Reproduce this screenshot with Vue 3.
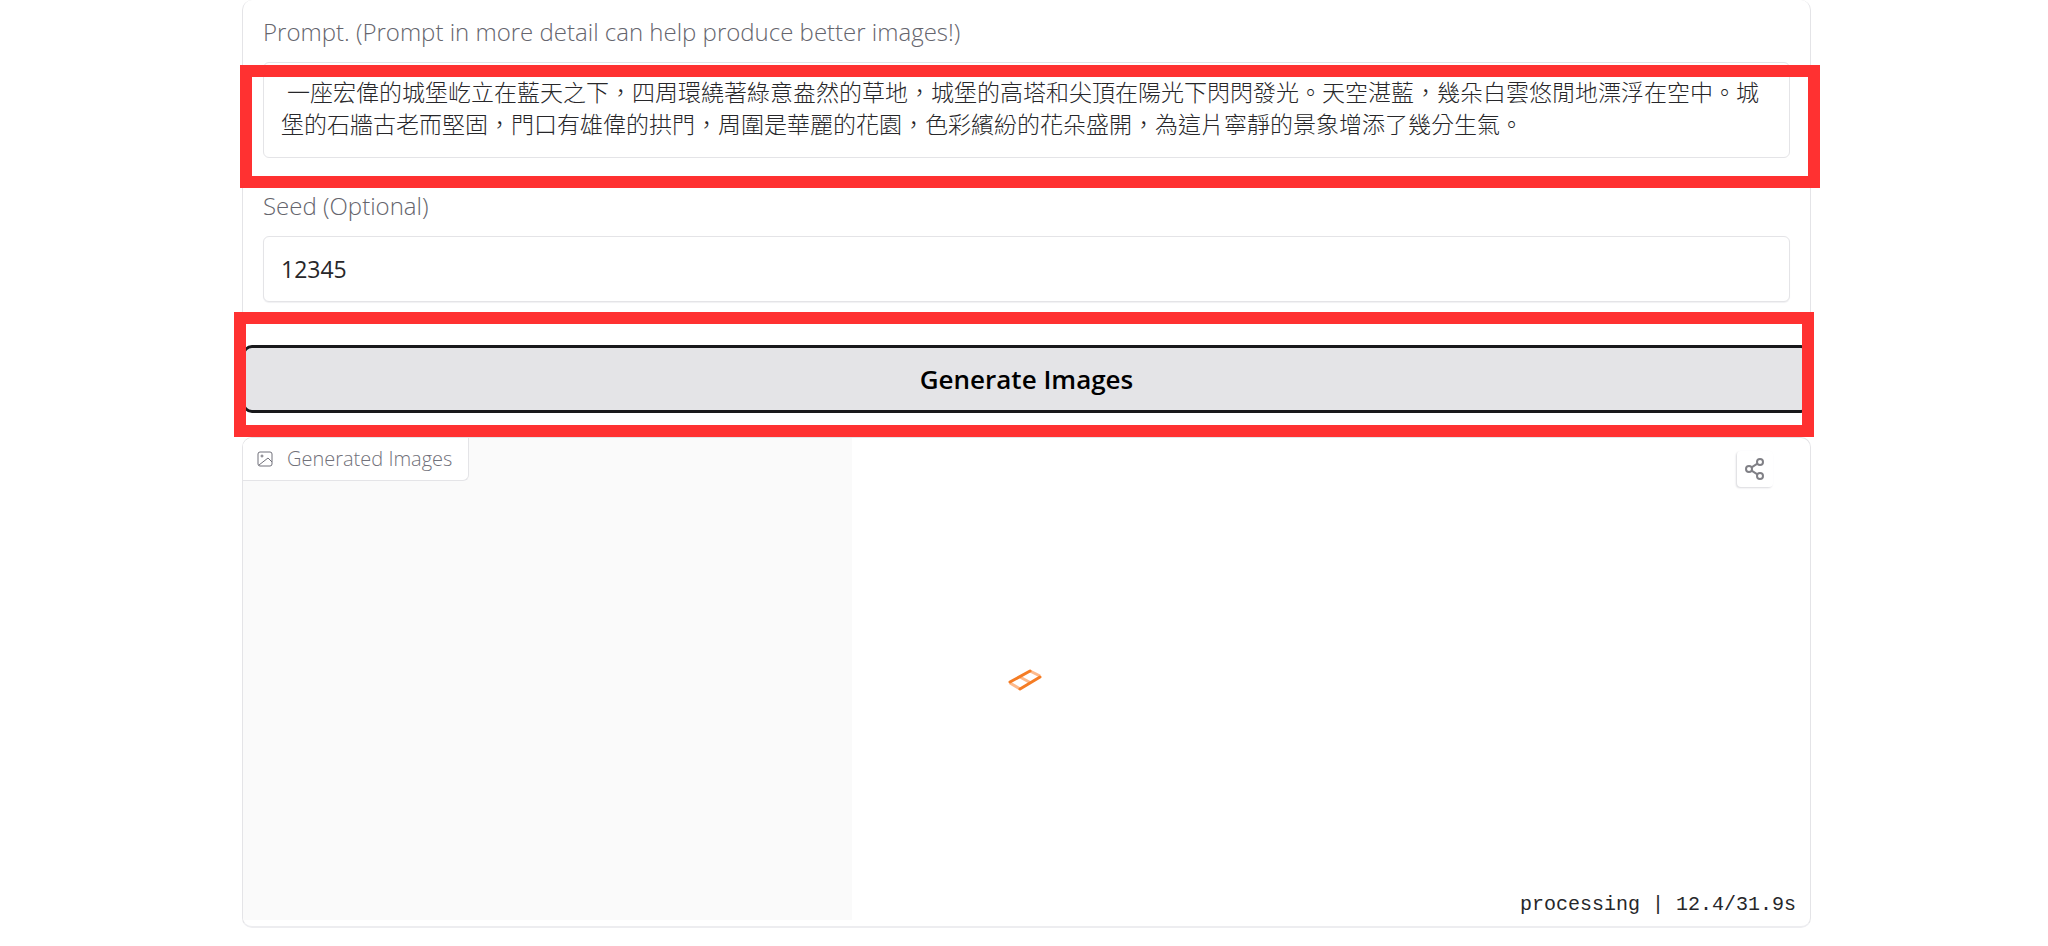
<template>
  <main class="page">
    <section class="form">
      <div class="field">
        <label for="prompt">Prompt. (Prompt in more detail can help produce better images!)</label>
        <textarea id="prompt" v-model="prompt" class="prompt" rows="2" spellcheck="false"></textarea>
      </div>
      <div class="field">
        <label for="seed">Seed (Optional)</label>
        <input id="seed" v-model="seed" class="seed" type="text" />
      </div>
      <div class="highlight highlight-prompt"></div>
    </section>

    <div class="action">
      <button class="generate" type="button">Generate Images</button>
      <div class="highlight highlight-button"></div>
    </div>

    <section class="gallery">
      <div class="progress" :style="{ width: progress + '%' }"></div>
      <header class="gallery-head">
        <div class="gallery-label">
          <svg width="16" height="16" viewBox="0 0 16 16" fill="none" stroke="currentColor">
            <rect x="1" y="1" width="14" height="14" rx="2" />
            <circle cx="5" cy="5" r="1" />
            <path d="M2 14 L11 7 L15 11" />
          </svg>
          <span>Generated Images</span>
        </div>
        <button class="share" type="button" aria-label="Share">
          <svg width="20" height="22" viewBox="0 0 20 22" fill="none" stroke="currentColor" stroke-width="2">
            <circle cx="15" cy="4" r="3" />
            <circle cx="4" cy="11" r="3" />
            <circle cx="15" cy="18" r="3" />
            <path d="M6.6 9.4 L12.4 5.6 M6.6 12.6 L12.4 16.4" />
          </svg>
        </button>
      </header>

      <div class="loader">
        <svg width="34" height="22" viewBox="0 0 34 22" fill="none" stroke-linejoin="round">
          <path d="M22 2 L32 7 M12 8 L23 14 M2 14 L12 20" stroke="#fdba8c" stroke-width="3" />
          <path d="M2 13 L22 2 M12 20 L32 8" stroke="#f57c24" stroke-width="3" stroke-linecap="round" />
        </svg>
      </div>

      <footer class="status">processing | {{ elapsed }}/{{ total }}s</footer>
    </section>
  </main>
</template>

<script setup>
import { ref, computed } from 'vue'

const prompt = ref(' 一座宏偉的城堡屹立在藍天之下，四周環繞著綠意盎然的草地，城堡的高塔和尖頂在陽光下閃閃發光。天空湛藍，幾朵白雲悠閒地漂浮在空中。城堡的石牆古老而堅固，門口有雄偉的拱門，周圍是華麗的花園，色彩繽紛的花朵盛開，為這片寧靜的景象增添了幾分生氣。')
const seed = ref('12345')

const elapsed = ref(12.4)
const total = ref(31.9)
const progress = computed(() => (elapsed.value / total.value) * 100)
</script>

<style>
body {
  margin: 0;
  background: #fff;
}
</style>

<style scoped>
.page {
  padding: 0 237px 16px 242px;
  font-family: 'Open Sans', 'Noto Sans CJK TC', sans-serif;
  color: #27272a;
}

.page *,
.page *::before {
  box-sizing: border-box;
}

.form {
  position: relative;
  display: flex;
  flex-direction: column;
  gap: 32px;
  padding: 16px 20px 20px;
  border: 1px solid #e4e4e7;
  border-top: 0;
  border-radius: 10px;
}

.field {
  display: flex;
  flex-direction: column;
  gap: 14px;
}

label {
  font-size: 24px;
  font-weight: 300;
  line-height: 32px;
  color: #65656d;
}

textarea,
input {
  display: block;
  width: 100%;
  border: 1px solid #e4e4e7;
  border-radius: 6px;
  background: #fff;
  color: #27272a;
  font-family: inherit;
  font-size: 23px;
  line-height: 32px;
  outline: none;
}

.prompt {
  height: 96px;
  padding: 13px 17px 17px;
  font-weight: 300;
  resize: none;
  overflow: hidden;
}

.seed {
  padding: 16px 17px;
  box-shadow: 0 1px 1px #f1f1f3;
}

.highlight {
  position: absolute;
  border: 12px solid #ff3131;
  pointer-events: none;
}

.highlight-prompt {
  top: 65px;
  left: -3px;
  right: -10px;
  height: 123px;
}

.action {
  position: relative;
  margin: 22px 0 24px;
}

.highlight-button {
  top: -33px;
  bottom: -24px;
  left: -8px;
  right: -3px;
  z-index: 1;
}

.generate {
  display: block;
  width: 100%;
  padding: 16px;
  border: 3px solid #18181b;
  border-radius: 10px;
  background: #e4e4e7;
  color: #000;
  font-family: inherit;
  font-size: 26px;
  font-weight: 600;
  line-height: 30px;
}

.gallery {
  position: relative;
  display: flex;
  flex-direction: column;
  border: 1px solid #e4e4e7;
  border-bottom: 2px solid #ededf0;
  border-radius: 10px;
  overflow: hidden;
}

.progress {
  position: absolute;
  top: 0;
  bottom: 6px;
  left: 0;
  background: #fafafa;
}

.gallery-head {
  position: relative;
  display: flex;
  align-items: flex-start;
  justify-content: space-between;
  padding-right: 37px;
}

.gallery-label {
  display: flex;
  align-items: center;
  gap: 14px;
  padding: 6px 16px 6px 14px;
  border: 1px solid #e4e4e7;
  border-top: 0;
  border-left: 0;
  border-bottom-right-radius: 6px;
  background: #fff;
  color: #71717a;
  font-size: 20px;
  font-weight: 300;
  line-height: 30px;
}

.share {
  display: flex;
  align-items: center;
  justify-content: center;
  width: 36px;
  height: 36px;
  margin-top: 13px;
  padding: 0;
  border: 0;
  border-radius: 4px;
  background: #fff;
  box-shadow: -1px 1px 2px #d9d9dd;
  color: #808086;
}

.loader {
  position: relative;
  display: flex;
  justify-content: center;
  padding: 182px 4px 199px 0;
}

.status {
  position: relative;
  padding: 0 14px 6px;
  font-family: 'Liberation Mono', monospace;
  font-size: 20px;
  line-height: 30px;
  text-align: right;
}
</style>
